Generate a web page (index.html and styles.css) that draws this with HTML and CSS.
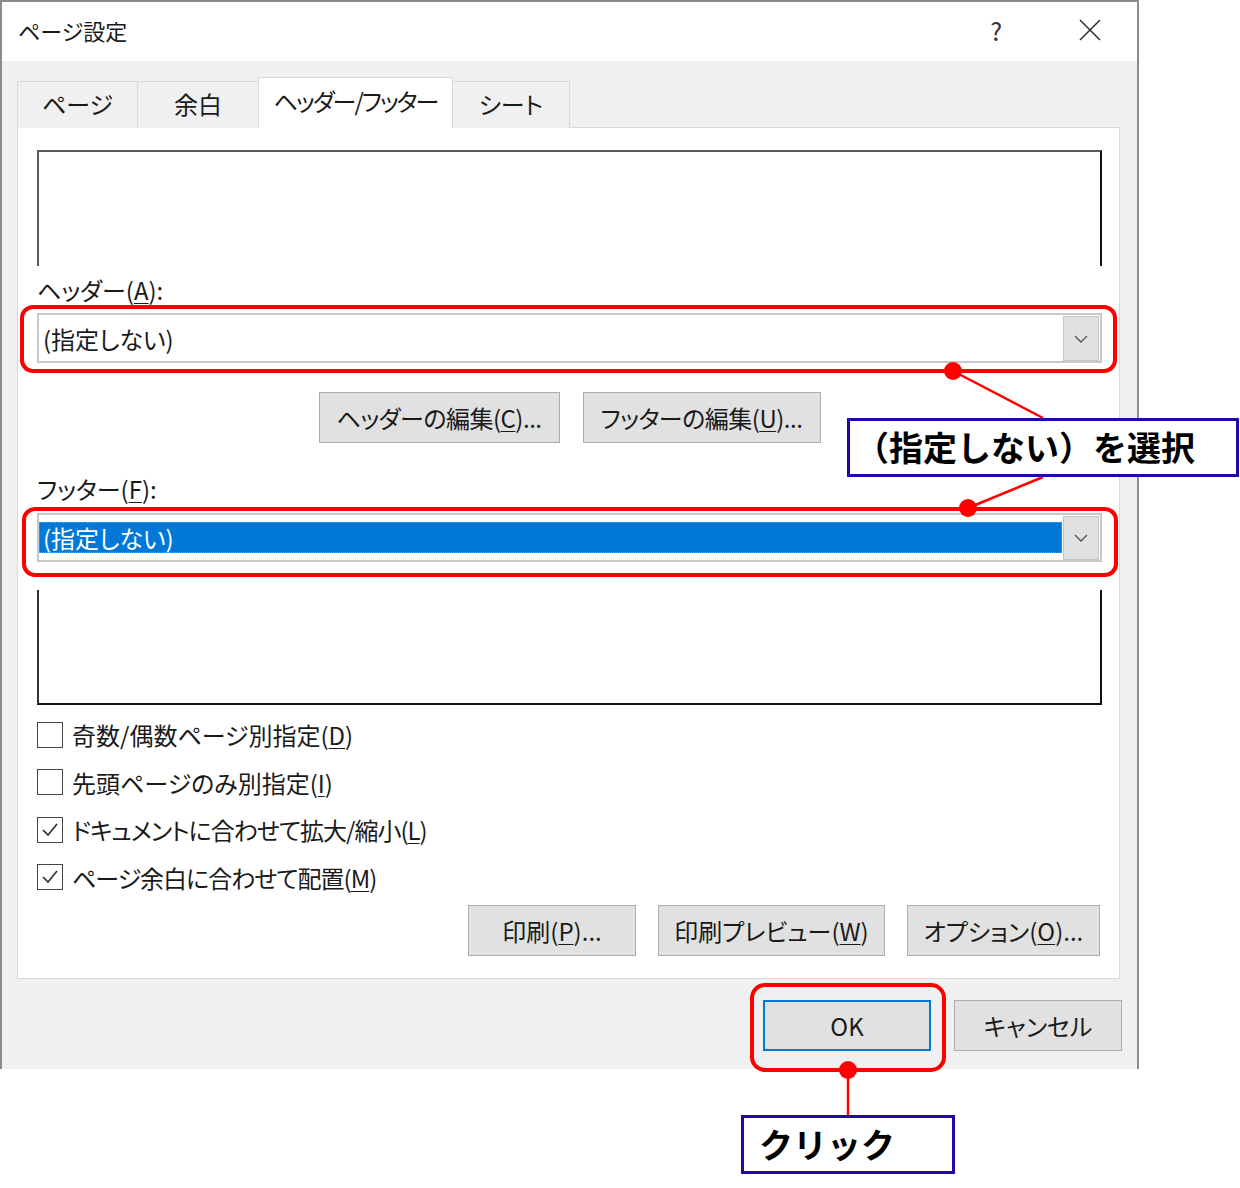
FILE: index.html
```html
<!DOCTYPE html>
<html lang="ja">
<head>
    <meta charset="UTF-8">
    <title>ページ設定</title>
    <link rel="stylesheet" href="styles.css">
</head>
<body>
    <div class="page">
        <div class="dialog">
            <div class="titlebar">
                <span class="title">ページ設定</span>
                <span class="help">?</span>
                <svg class="close" width="22" height="22" viewBox="0 0 22 22">
                    <path d="M1 1 L21 21 M21 1 L1 21" stroke="#333" stroke-width="1.6" fill="none"/>
                </svg>
            </div>

            <div class="dialog-body">
                <div class="tabs">
                    <div class="tab tab-page">ページ</div>
                    <div class="tab tab-margin">余白</div>
                    <div class="tab tab-hf active">ヘッダー/フッター</div>
                    <div class="tab tab-sheet">シート</div>
                </div>

                <div class="panel">
                    <div class="preview preview-top"></div>

                    <div class="field-label">ヘッダー(<u>A</u>):</div>
                    <div class="combo">
                        <div class="combo-value">(指定しない)</div>
                        <div class="combo-btn">
                            <svg width="14" height="8" viewBox="0 0 14 8"><path d="M1 1 L7 7 L13 1" stroke="#555" stroke-width="1.4" fill="none"/></svg>
                        </div>
                    </div>

                    <div class="edit-row">
                        <button class="btn btn-edit">ヘッダーの編集(<u>C</u>)...</button>
                        <button class="btn btn-edit">フッターの編集(<u>U</u>)...</button>
                    </div>

                    <div class="field-label field-label-footer">フッター(<u>F</u>):</div>
                    <div class="combo combo-footer">
                        <div class="combo-value selected">(指定しない)</div>
                        <div class="combo-btn">
                            <svg width="14" height="8" viewBox="0 0 14 8"><path d="M1 1 L7 7 L13 1" stroke="#555" stroke-width="1.4" fill="none"/></svg>
                        </div>
                    </div>

                    <div class="preview preview-bottom"></div>

                    <div class="checks">
                        <div class="check"><span class="box"></span>奇数/偶数ページ別指定(<u>D</u>)</div>
                        <div class="check"><span class="box"></span>先頭ページのみ別指定(<u>I</u>)</div>
                        <div class="check kana"><span class="box"><svg width="24" height="24" viewBox="0 0 24 24"><path d="M5 12 L10 17 L19 6" stroke="#333" stroke-width="1.7" fill="none"/></svg></span>ドキュメントに合わせて拡大/縮小(<u>L</u>)</div>
                        <div class="check kana"><span class="box"><svg width="24" height="24" viewBox="0 0 24 24"><path d="M5 12 L10 17 L19 6" stroke="#333" stroke-width="1.7" fill="none"/></svg></span>ページ余白に合わせて配置(<u>M</u>)</div>
                    </div>

                    <div class="panel-buttons">
                        <button class="btn btn-print">印刷(<u>P</u>)...</button>
                        <button class="btn btn-preview">印刷プレビュー(<u>W</u>)</button>
                        <button class="btn btn-options">オプション(<u>O</u>)...</button>
                    </div>
                </div>

                <div class="dialog-buttons">
                    <button class="btn btn-ok">OK</button>
                    <button class="btn btn-cancel">キャンセル</button>
                </div>
            </div>
        </div>

        <!-- annotations drawn over the screenshot -->
        <svg class="marks" width="1240" height="1188" viewBox="0 0 1240 1188">
            <g fill="none" stroke="#ff0000" stroke-width="4">
                <rect x="22" y="307" width="1093" height="64" rx="11"/>
                <rect x="24" y="509" width="1092" height="66" rx="11"/>
                <rect x="752" y="985" width="192" height="85" rx="13"/>
            </g>
            <g stroke="#ff0000" stroke-width="2.5">
                <line x1="953" y1="371" x2="1043" y2="418"/>
                <line x1="968" y1="508" x2="1043" y2="477"/>
                <line x1="848" y1="1070" x2="848" y2="1116"/>
            </g>
            <g fill="#ff0000">
                <circle cx="953" cy="371" r="9"/>
                <circle cx="968" cy="508" r="9"/>
                <circle cx="848" cy="1070" r="9"/>
            </g>
        </svg>
        <div class="callout callout-select">（指定しない）を選択</div>
        <div class="callout callout-click">クリック</div>
    </div>
</body>
</html>
```

FILE: styles.css
```css
body {
    margin: 0;
    background-color: #fff;
    font-family: "Noto Sans CJK JP", "Noto Sans", sans-serif;
    color: #1a1a1a;
}

.page {
    position: relative;
    width: 1240px;
    height: 1188px;
    overflow: hidden;
}

.dialog {
    width: 1135px;
    border: 2px solid #8c8c8c;
    border-bottom: none;
    background-color: #f0f0f0;
}

.titlebar {
    display: flex;
    align-items: center;
    height: 55px;
    padding-bottom: 4px;
    background-color: #fff;
    padding-left: 16px;
}

.title {
    font-size: 22px;
    font-feature-settings: "palt";
    flex: 1;
}

.help {
    font-size: 25px;
    color: #333;
    margin-right: 77px;
}

.close {
    margin-right: 36px;
}

.dialog-body {
    padding: 16px 17px 18px 15px;
}

.tabs {
    display: flex;
    align-items: flex-end;
    height: 51px;
    margin-bottom: -1px;
}

.tab {
    height: 47px;
    box-sizing: border-box;
    border: 1px solid #d9d9d9;
    border-bottom: none;
    margin-right: -1px;
    display: flex;
    align-items: center;
    justify-content: center;
    padding-bottom: 3px;
    font-size: 24px;
    font-feature-settings: "palt";
    background-color: #f0f0f0;
}

.tab.active {
    height: 51px;
    background-color: #fff;
    position: relative;
    z-index: 1;
    padding-bottom: 5px;
    letter-spacing: -2px;
}

.tab-page { width: 121px; }
.tab-margin { width: 122px; }
.tab-hf { width: 195px; }
.tab-sheet { width: 118px; }

.panel {
    background-color: #fff;
    border: 1px solid #d9d9d9;
    padding: 22px 17px 22px 19px;
}

.preview {
    height: 116px;
    box-sizing: border-box;
}

.preview-top {
    border-top: 2px solid #5c5c5c;
    border-left: 2px solid #5c5c5c;
    border-right: 2px solid #111;
}

.preview-bottom {
    height: 115px;
    margin-top: 28px;
    border-bottom: 2px solid #111;
    border-left: 2px solid #333;
    border-right: 2px solid #111;
}

.field-label {
    font-size: 24px;
    font-feature-settings: "palt";
    line-height: 30px;
    margin-top: 9px;
    margin-bottom: 8px;
}

.field-label-footer {
    margin-top: 31px;
    margin-bottom: 9px;
}

u {
    text-underline-offset: 3px;
    text-decoration-thickness: 1px;
}

.combo {
    display: flex;
    align-items: center;
    height: 50px;
    box-sizing: border-box;
    border: 2px solid #c8c8cc;
    padding-right: 1px;
}

.combo-footer {
    height: 49px;
}

.combo-value {
    flex: 1;
    height: 31px;
    line-height: 31px;
    padding-left: 4px;
    font-size: 24px;
    font-feature-settings: "palt";
}

.combo-value.selected {
    background-color: #0078d7;
    color: #fff;
    outline: 1px dotted #c98a4d;
    outline-offset: -1px;
}

.combo-btn {
    width: 34px;
    align-self: stretch;
    margin: 1px 0 0 1px;
    background-color: #e1e1e1;
    border: 1px solid #c6c6c6;
    display: flex;
    align-items: center;
    justify-content: center;
}

.btn {
    font-family: "Noto Sans CJK JP", "Noto Sans", sans-serif;
    font-size: 24px;
    font-feature-settings: "palt";
    color: #1a1a1a;
    background-color: #e1e1e1;
    border: 1px solid #adadad;
    height: 51px;
    padding: 0;
    box-sizing: border-box;
}

.edit-row {
    display: flex;
    justify-content: center;
    gap: 23px;
    margin-top: 29px;
}

.btn-edit {
    width: 241px;
    letter-spacing: -0.5px;
}

.btn-edit + .btn-edit {
    width: 238px;
}

.checks {
    margin-top: 6px;
}

.check {
    display: flex;
    align-items: center;
    height: 47.5px;
    font-size: 24px;
    font-feature-settings: "palt";
}

.check.kana {
    letter-spacing: -1px;
}

.box {
    width: 26px;
    height: 26px;
    box-sizing: border-box;
    border: 1.5px solid #444;
    margin-right: 9px;
    display: flex;
    align-items: center;
    justify-content: center;
}

.panel-buttons {
    display: flex;
    justify-content: flex-end;
    gap: 22px;
    margin-top: 4px;
    padding-right: 2px;
}

.btn-print { width: 168px; }
.btn-preview { width: 227px; }
.btn-options { width: 193px; }

.dialog-buttons {
    display: flex;
    justify-content: flex-end;
    gap: 23px;
    margin-top: 21px;
    margin-right: -2px;
}

.btn-ok {
    width: 168px;
    border: 2px solid #0078d7;
}

.btn-cancel {
    width: 168px;
}

.marks {
    position: absolute;
    left: 0;
    top: 0;
    pointer-events: none;
}

.callout {
    position: absolute;
    box-sizing: border-box;
    height: 59px;
    border: 3px solid #1e0aa6;
    background-color: #fff;
    color: #000;
    font-size: 34px;
    font-weight: 700;
    line-height: 52px;
    padding-left: 5px;
    white-space: nowrap;
}

.callout-select {
    left: 847px;
    top: 418px;
    width: 392px;
}

.callout-click {
    left: 741px;
    top: 1115px;
    width: 214px;
    padding-left: 15px;
}
```
